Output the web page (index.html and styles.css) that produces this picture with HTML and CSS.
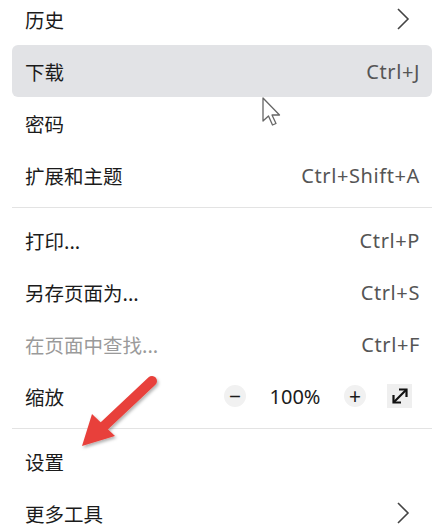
FILE: index.html
```html
<!DOCTYPE html>
<html lang="zh-CN">
<head>
  <meta charset="UTF-8" />
  <title>菜单</title>
  <link rel="stylesheet" href="styles.css">
</head>
<body>
  <div class="menu">
    <div class="group">
      <div class="item"><span class="label">历史</span><span class="chev"><svg width="14" height="22" viewBox="0 0 14 22"><path d="M2 1 L12 11 L2 21" fill="none" stroke="#444" stroke-width="1.6"/></svg></span></div>
      <div class="item active"><span class="label">下载</span><span class="key">Ctrl+J</span></div>
      <div class="item"><span class="label">密码</span></div>
      <div class="item"><span class="label">扩展和主题</span><span class="key">Ctrl+Shift+A</span></div>
    </div>
    <hr class="sep">
    <div class="group">
      <div class="item"><span class="label">打印...</span><span class="key">Ctrl+P</span></div>
      <div class="item"><span class="label">另存页面为...</span><span class="key">Ctrl+S</span></div>
      <div class="item"><span class="label muted">在页面中查找...</span><span class="key">Ctrl+F</span></div>
      <div class="item">
        <span class="label">缩放</span>
        <div class="zoom">
          <span class="zbtn">&minus;</span>
          <span class="zval">100%</span>
          <span class="zbtn">+</span>
          <span class="full"><svg width="20" height="20" viewBox="0 0 20 20"><path d="M4 16 L16 4" stroke="#111" stroke-width="2.2"/><path d="M9 3.5 H16.5 V11" fill="none" stroke="#111" stroke-width="2.2"/><path d="M3.5 9 V16.5 H11" fill="none" stroke="#111" stroke-width="2.2"/></svg></span>
        </div>
      </div>
    </div>
    <hr class="sep">
    <div class="group">
      <div class="item"><span class="label">设置</span></div>
      <div class="item"><span class="label">更多工具</span><span class="chev"><svg width="14" height="22" viewBox="0 0 14 22"><path d="M2 1 L12 11 L2 21" fill="none" stroke="#444" stroke-width="1.6"/></svg></span></div>
    </div>
  </div>

  <!-- mouse pointer -->
  <svg class="cursor" width="24" height="32" viewBox="0 0 24 32">
    <path d="M1 1 L1 24 L6.5 19 L10.5 28 L14 26.5 L10 18 L17.5 18 Z" fill="#fff" stroke="#666" stroke-width="1.3" stroke-linejoin="round"/>
  </svg>

  <!-- red annotation arrow -->
  <svg class="arrow" width="100" height="90" viewBox="0 0 100 90">
    <defs>
      <filter id="sh" x="-20%" y="-20%" width="140%" height="140%">
        <feDropShadow dx="1.5" dy="2" stdDeviation="1.5" flood-color="#000" flood-opacity="0.3"/>
      </filter>
    </defs>
    <g filter="url(#sh)">
      <path d="M82 15 L32 62" stroke="#e8413b" stroke-width="10" stroke-linecap="round"/>
      <path d="M12 80 L22 48 L45 70 Z" fill="#e8413b"/>
    </g>
  </svg>
</body>
</html>
```

FILE: styles.css
```css
body {
  margin: 0;
  background: #fff;
  font-family: "Noto Sans", "Noto Sans CJK SC", sans-serif;
  color: #1b1b1b;
  overflow: hidden;
}

.menu {
  margin-top: -7px;
  padding: 0 12px;
}

.item {
  height: 52px;
  display: flex;
  align-items: center;
  justify-content: space-between;
  padding: 0 13px;
  border-radius: 6px;
  font-size: 19.5px;
}

.item.active {
  background: #e2e3e6;
}

.label {
  font-family: "Noto Sans CJK SC", sans-serif;
}

.muted {
  color: #9a9a9a;
}

.key {
  color: #555;
  font-size: 20px;
  letter-spacing: 0.6px;
  margin-right: -1px;
}

.chev {
  display: flex;
  margin-right: 9px;
}

.sep {
  border: none;
  border-top: 1px solid #e3e3e3;
  margin: 6px 0 6px 0;
}

.zoom {
  display: flex;
  align-items: center;
  margin-right: 7px;
}

.zbtn {
  width: 22px;
  height: 22px;
  border-radius: 50%;
  background: #f1f1f1;
  display: flex;
  align-items: center;
  justify-content: center;
  font-size: 21px;
  line-height: 1;
}

.zval {
  width: 98px;
  text-align: center;
  font-size: 20px;
}

.full {
  width: 25px;
  height: 24px;
  background: #efefef;
  display: flex;
  align-items: center;
  justify-content: center;
  margin-left: 21px;
}

.cursor {
  position: absolute;
  left: 262px;
  top: 97px;
}

.arrow {
  position: absolute;
  left: 70px;
  top: 366px;
}
```
